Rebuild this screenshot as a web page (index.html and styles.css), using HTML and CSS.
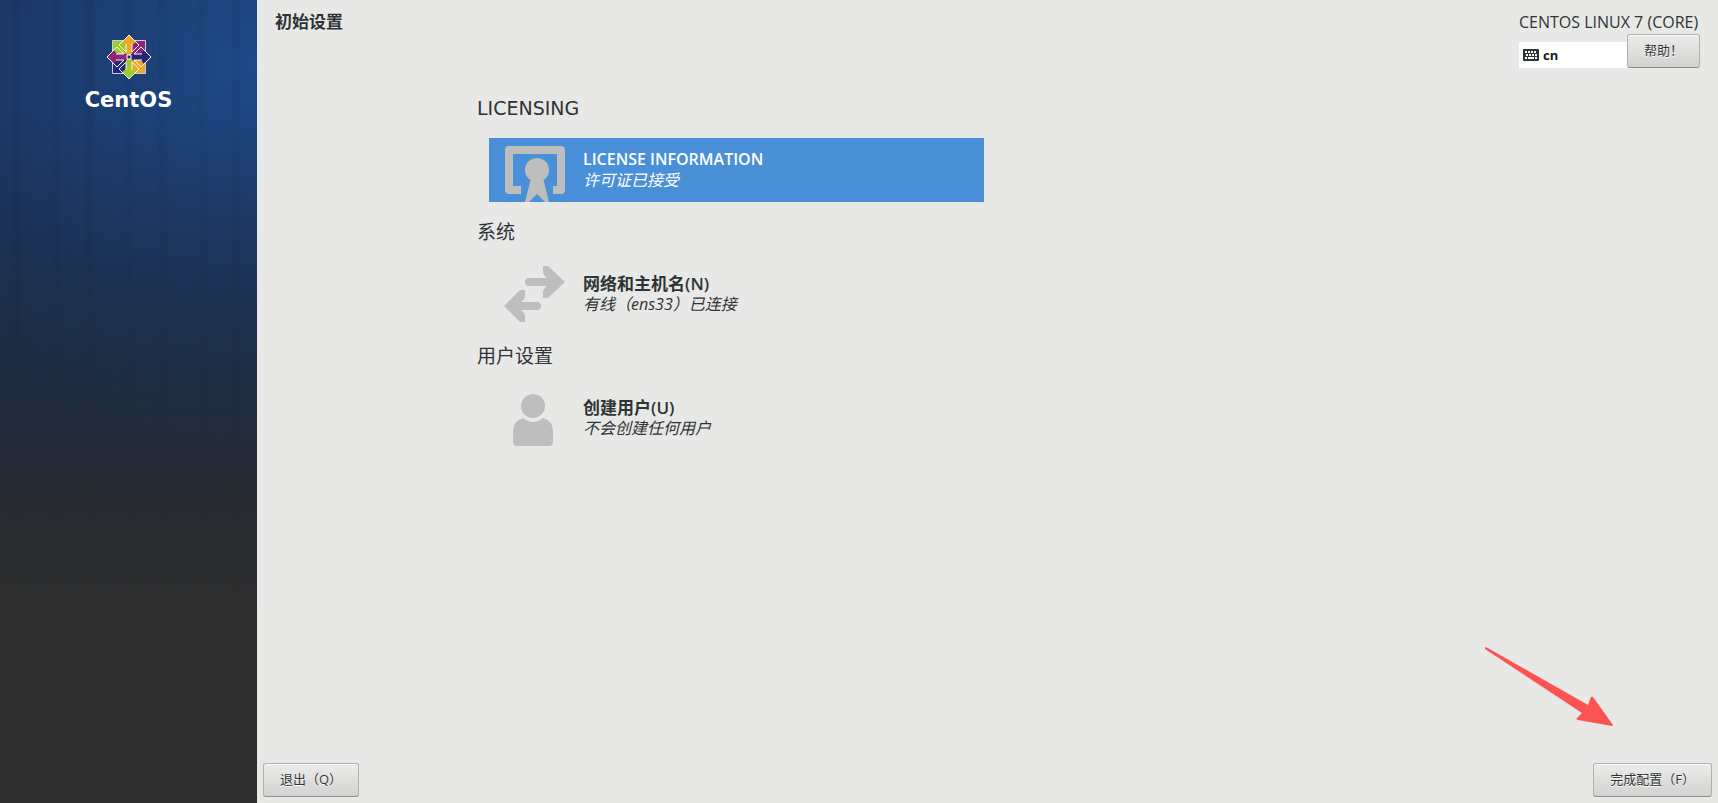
FILE: index.html
```
<!DOCTYPE html>
<html lang="zh-CN">
  <head>
    <meta charset="UTF-8" />
    <meta name="viewport" content="width=device-width, initial-scale=1.0" />
    <title>初始设置</title>
    <link rel="stylesheet" href="styles.css">
  </head>
  <body>
    <aside class="sidebar">
      <svg class="logo" viewBox="0 0 46 46" aria-hidden="true">
        <g stroke="#c3cde0" stroke-width="1">
          <path fill="#9ccd2a" d="M6.500 6.500H23V23H6.500z" />
          <path fill="#932279" d="M23 6.500h16.500V23H23z" />
          <path fill="#262577" d="M6.500 23H23v16.500H6.500z" />
          <path fill="#efa724" d="M23 23h16.500v16.500H23z" />
        </g>
        <path fill="#efa724" d="M23 1l7 7-4 3v10h-6V11l-4-3z" />
        <path fill="#262577" d="M45 23l-7 7-3-4H25v-6h10l3-4z" />
        <path fill="#9ccd2a" d="M23 45l-7-7 4-3V25h6v10l4 3z" />
        <path fill="#932279" d="M1 23l7-7 3 4h10v6H11l-3 4z" />
        <g fill="none" stroke="#f4f4fa" stroke-width="1">
          <path d="M23 1l10 10-7 7V10M23 1L13 11l7 7V10" />
          <path d="M45 23L35 13l-7 7h8M45 23L35 33l-7-7h8" />
          <path d="M23 45l10-10-7-7v8M23 45L13 35l7-7v8" />
          <path d="M1 23l10-10 7 7h-8M1 23l10 10 7-7h-8" />
        </g>
        <path fill="#262577" stroke="#fff" d="M21 21h4v4h-4z" />
      </svg>
      <span class="brand">CentOS</span>
    </aside>
    <div class="main">
      <header class="header">
        <h1 class="title">初始设置</h1>
        <div class="product">
          <span class="product-name">CENTOS LINUX 7 (CORE)</span>
          <div class="tools">
            <button class="layout" type="button">
              <svg class="keyboard" viewBox="0 0 16 12" aria-hidden="true">
                <rect width="16" height="12" rx="1" fill="#2e3436" />
                <path stroke="#fff" stroke-width="2" stroke-dasharray="2 1" d="M2 3h12M3 6h11" />
                <path stroke="#fff" stroke-width="2" d="M2 9h2M5 9h6M12 9h2" />
              </svg>
              cn
            </button>
            <button class="button" type="button">帮助！</button>
          </div>
        </div>
      </header>
      <main class="content">
        <h2 class="category">LICENSING</h2>
        <a class="spoke selected" href="#license">
          <svg class="icon" viewBox="0 0 64 64" aria-hidden="true">
            <path d="M6 8h52q4 0 4 4v40q0 4-4 4h-8v-8h4V16H10v32h8v8H6q-4 0-4-4V12q0-4 4-4z" />
            <circle cx="34" cy="32" r="12" />
            <path d="M28 40h12l6 24h-4l-8-8-8 8h-4z" />
          </svg>
          <span class="text">
            <strong class="name latin">LICENSE INFORMATION</strong>
            <em class="status">许可证已接受</em>
          </span>
        </a>
        <h2 class="category">系统</h2>
        <a class="spoke" href="#network">
          <svg class="icon" viewBox="0 0 64 64" aria-hidden="true">
            <path d="M40 4h5l17 16-17 16h-5v-6q0-2 2-4l2-2H26q-4 0-4-4t4-4h18l-2-2q-2-2-2-4z" />
            <path d="M22 28h-5L1 44l16 16h5v-6q0-2-2-4l-2-2h16q4 0 4-4t-4-4H18l2-2q2-2 2-4z" />
          </svg>
          <span class="text">
            <strong class="name">网络和主机名(N)</strong>
            <em class="status">有线（ens33）已连接</em>
          </span>
        </a>
        <h2 class="category">用户设置</h2>
        <a class="spoke" href="#user">
          <svg class="icon" viewBox="0 0 64 64" aria-hidden="true">
            <circle cx="30" cy="20" r="12" />
            <path d="M20 32q10 8 20 0q10 3 10 13v11q0 4-4 4H14q-4 0-4-4V45q0-10 10-13z" />
          </svg>
          <span class="text">
            <strong class="name">创建用户(U)</strong>
            <em class="status">不会创建任何用户</em>
          </span>
        </a>
      </main>
      <footer class="footer">
        <button class="button" type="button">退出（Q）</button>
        <button class="button" type="button">完成配置（F）</button>
      </footer>
    </div>
    <svg class="pointer" viewBox="0 0 128 80" aria-hidden="true">
      <path d="M0 1l1-1 102 58 3-8q1-1 2 0l20 28-1 1-34-6q-2 0-1-2l5-5L0 2z" />
    </svg>
  </body>
</html>
```

FILE: styles.css
```
* {
  box-sizing: border-box;
}
body {
  display: flex;
  min-height: 100vh;
  margin: 0;
  background-color: #e8e8e6;
  color: #2e3436;
  font-family: "Open Sans", "Noto Sans CJK SC", sans-serif;
}
h1,
h2 {
  margin: 0;
}

/* sidebar */
.sidebar {
  display: flex;
  flex: none;
  flex-direction: column;
  align-items: center;
  width: 257px;
  padding-top: 34px;
  background:
    linear-gradient(transparent 14%, rgba(34, 38, 44, 0.5) 45%, rgba(42, 43, 44, 0.9) 65%, #2d2d2d 76%),
    repeating-linear-gradient(90deg, transparent 0 11px, rgba(0, 0, 0, 0.05) 13px 20px, transparent 22px 51px, rgba(0, 0, 0, 0.04) 53px 60px, transparent 62px 73px),
    radial-gradient(circle 420px at 100% 8%, #1f4a87, #1c3f75 35%, #172f55);
}
.logo {
  width: 46px;
  height: 46px;
}
.brand {
  margin-top: 7px;
  color: #fff;
  font: bold 21px/26px "DejaVu Sans", sans-serif;
}

/* header */
.main {
  display: flex;
  flex: 1;
  flex-direction: column;
}
.header {
  display: flex;
  justify-content: space-between;
  padding: 10px 18px 0;
}
.title {
  font-size: 17px;
  line-height: 24px;
}
.product {
  display: flex;
  flex-direction: column;
}
.product-name {
  font-size: 16px;
  line-height: 24px;
}
.tools {
  display: flex;
  align-items: flex-end;
}
.layout {
  display: flex;
  align-items: center;
  gap: 4px;
  width: 108px;
  height: 26px;
  padding: 0 4px;
  border: 0;
  background-color: #fff;
  color: #1a1a1a;
  font: bold 13px/20px "Open Sans", sans-serif;
}
.keyboard {
  width: 16px;
  height: 12px;
}
.button {
  height: 34px;
  padding: 0 16px 4px;
  border: 1px solid #b0b0ae;
  border-bottom-color: #8e8e8c;
  border-radius: 3px;
  background: linear-gradient(#ececea, #d2d2d0);
  box-shadow: inset 0 1px #fafafa;
  color: #2e3436;
  font: 13px "Open Sans", "Noto Sans CJK SC", sans-serif;
  text-shadow: 0 1px #fff;
}

/* content */
.content {
  flex: 1;
  width: 727px;
  padding: 10px 0 0 220px;
}
.category {
  padding: 15px 0;
  font: 19px/30px "DejaVu Sans", "Noto Sans CJK SC", sans-serif;
}
.spoke {
  display: flex;
  align-items: center;
  gap: 16px;
  height: 64px;
  margin-left: 12px;
  padding-left: 14px;
  color: #2e3436;
  text-decoration: none;
}
.spoke.selected {
  background-color: #4a90d9;
  color: #fff;
}
.icon {
  width: 64px;
  height: 64px;
  fill: #bebebe;
}
.text {
  display: flex;
  flex-direction: column;
}
.name {
  font-size: 17px;
  font-weight: 600;
  line-height: 21px;
}
.name.latin {
  font-size: 16px;
}
.status {
  font-size: 16px;
  line-height: 21px;
}

/* footer */
.footer {
  display: flex;
  justify-content: space-between;
  padding: 6px;
}

.pointer {
  position: absolute;
  right: 105px;
  bottom: 76px;
  width: 128px;
  height: 80px;
  fill: #fb5351;
}
```
